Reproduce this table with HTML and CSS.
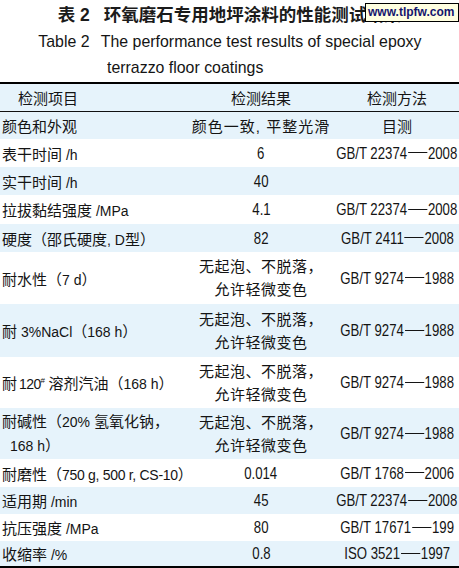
FILE: index.html
```html
<!DOCTYPE html>
<html lang="zh">
<head>
<meta charset="utf-8">
<title>表 2 环氧磨石专用地坪涂料的性能测试结果</title>
<link rel="stylesheet" href="styles.css">
</head>
<body>
<div class="page">
  <div class="caption">
    <p class="cap-cn">表 2<span class="gap"></span>环氧磨石专用地坪涂料的性能测试结果</p>
    <p class="cap-en"><span class="sx">Table 2<span class="gap"></span>The performance test results of special epoxy</span></p>
    <p class="cap-en cap-en2"><span class="sx">terrazzo floor coatings</span></p>
    <div class="watermark">www.tlpfw.com</div>
  </div>
  <div class="table">
    <div class="row head">
      <div class="c1 hc1">检测项目</div>
      <div class="c2">检测结果</div>
      <div class="c3">检测方法</div>
    </div>
    <div class="row">
      <div class="c1">颜色和外观</div>
      <div class="c2 spaced">颜色一致, 平整光滑</div>
      <div class="c3">目测</div>
    </div>
    <div class="row">
      <div class="c1">表干时间<span class="l"> /h</span></div>
      <div class="c2"><span class="n">6</span></div>
      <div class="c3"><span class="n">GB/T 22374<i class="dash"></i>2008</span></div>
    </div>
    <div class="row">
      <div class="c1">实干时间<span class="l"> /h</span></div>
      <div class="c2"><span class="n">40</span></div>
      <div class="c3"></div>
    </div>
    <div class="row">
      <div class="c1">拉拔黏结强度<span class="l"> /MPa</span></div>
      <div class="c2"><span class="n">4.1</span></div>
      <div class="c3"><span class="n">GB/T 22374<i class="dash"></i>2008</span></div>
    </div>
    <div class="row">
      <div class="c1">硬度（邵氏硬度<span class="l">, D</span>型）</div>
      <div class="c2"><span class="n">82</span></div>
      <div class="c3"><span class="n">GB/T 2411<i class="dash"></i>2008</span></div>
    </div>
    <div class="row">
      <div class="c1">耐水性（<span class="l">7 d</span>）</div>
      <div class="c2 two"><span>无起泡、不脱落，</span><span>允许轻微变色</span></div>
      <div class="c3"><span class="n">GB/T 9274<i class="dash"></i>1988</span></div>
    </div>
    <div class="row">
      <div class="c1">耐<span class="l"> 3%NaCl</span>（<span class="l">168 h</span>）</div>
      <div class="c2 two"><span>无起泡、不脱落，</span><span>允许轻微变色</span></div>
      <div class="c3"><span class="n">GB/T 9274<i class="dash"></i>1988</span></div>
    </div>
    <div class="row">
      <div class="c1">耐<span class="l tight">120<sup>#</sup></span>溶剂汽油（<span class="l">168 h</span>）</div>
      <div class="c2 two"><span>无起泡、不脱落，</span><span>允许轻微变色</span></div>
      <div class="c3"><span class="n">GB/T 9274<i class="dash"></i>1988</span></div>
    </div>
    <div class="row">
      <div class="c1 two"><span>耐碱性（<span class="l">20% </span>氢氧化钠，</span><span class="indent"><span class="l">168 h</span>）</span></div>
      <div class="c2 two"><span>无起泡、不脱落，</span><span>允许轻微变色</span></div>
      <div class="c3"><span class="n">GB/T 9274<i class="dash"></i>1988</span></div>
    </div>
    <div class="row">
      <div class="c1">耐磨性（<span class="l narrow">750 g, 500 r, CS-10</span>）</div>
      <div class="c2"><span class="n">0.014</span></div>
      <div class="c3"><span class="n">GB/T 1768<i class="dash"></i>2006</span></div>
    </div>
    <div class="row">
      <div class="c1">适用期<span class="l"> /min</span></div>
      <div class="c2"><span class="n">45</span></div>
      <div class="c3"><span class="n">GB/T 22374<i class="dash"></i>2008</span></div>
    </div>
    <div class="row">
      <div class="c1">抗压强度<span class="l"> /MPa</span></div>
      <div class="c2"><span class="n">80</span></div>
      <div class="c3"><span class="n">GB/T 17671<i class="dash"></i>199</span></div>
    </div>
    <div class="row">
      <div class="c1">收缩率<span class="l"> /%</span></div>
      <div class="c2"><span class="n">0.8</span></div>
      <div class="c3"><span class="n">ISO 3521<i class="dash"></i>1997</span></div>
    </div>
  </div>
</div>
</body>
</html>
```
FILE: styles.css
```css
* { box-sizing: border-box; }
html, body { margin: 0; padding: 0; background: #ffffff; }
body {
  width: 459px;
  height: 568px;
  overflow: hidden;
  color: #141414;
  font-family: "Liberation Sans", "Noto Sans CJK SC", sans-serif;
}
.page { width: 459px; }

.caption {
  position: relative;
  height: 82px;
  padding-top: 2px;
}
.caption p { margin: 0; height: 26.5px; line-height: 26px; white-space: nowrap; }
.cap-cn {
  text-align: center;
  font-size: 17.5px;
  font-weight: 700;
  color: #1b1b1b;
}
.cap-cn .gap { display: inline-block; width: 14px; }
.cap-en {
  display: flex;
  justify-content: center;
  font-size: 17px;
}
.cap-en .sx { display: inline-block; transform: scaleX(0.935); transform-origin: center; }
.cap-en .gap { display: inline-block; width: 12px; }
.cap-en2 { justify-content: flex-start; padding-left: 107px; }
.cap-en2 .sx { transform-origin: left center; }

.watermark {
  position: absolute;
  left: 365px;
  top: 3px;
  width: 94px;
  height: 19px;
  background: #ffffe1;
  border: 1px solid #000;
  font-weight: 700;
  font-size: 12px;
  line-height: 17px;
  color: #14146e;
  padding-left: 2px;
}

.table {
  border-top: 2px solid #000;
  border-bottom: 2px solid #000;
  display: grid;
  grid-template-rows: 28px 27px 28px 28px 29px 28px 52px 53px 51px 51px 28px 27px 27px 25px;
  font-size: 15px;
}
.row {
  display: grid;
  grid-template-columns: 187px 148px 124px;
  align-items: center;
  background: #ffffff;
}
.row:nth-child(even) { background: #e6f3fb; }
.row.head { background: #e6f3fb; border-bottom: 1px solid #111; }

.c1 { padding-left: 2px; white-space: nowrap; }
.hc1 { padding-left: 18px; }
.c2, .c3 {
  display: flex;
  justify-content: center;
  align-items: center;
  white-space: nowrap;
}
.l { font-size: 14px; }
.tight { margin: 0 4px 0 2px; letter-spacing: -0.6px; }
.narrow { letter-spacing: -0.3px; }
.n {
  display: inline-block;
  font-size: 16.5px;
  transform: scaleX(0.8);
  transform-origin: center;
}
.dash {
  display: inline-block;
  width: 24px;
  height: 1.2px;
  background: currentColor;
  vertical-align: 0.32em;
  margin: 0 1px;
}
.spaced { letter-spacing: 1px; }
.two { display: flex; flex-direction: column; line-height: 23px; }
.c2.two { align-items: center; letter-spacing: 0.5px; }
.c1.two { align-items: flex-start; }
.indent { padding-left: 8px; }
sup { font-size: 8px; vertical-align: 6px; line-height: 0; }
```
